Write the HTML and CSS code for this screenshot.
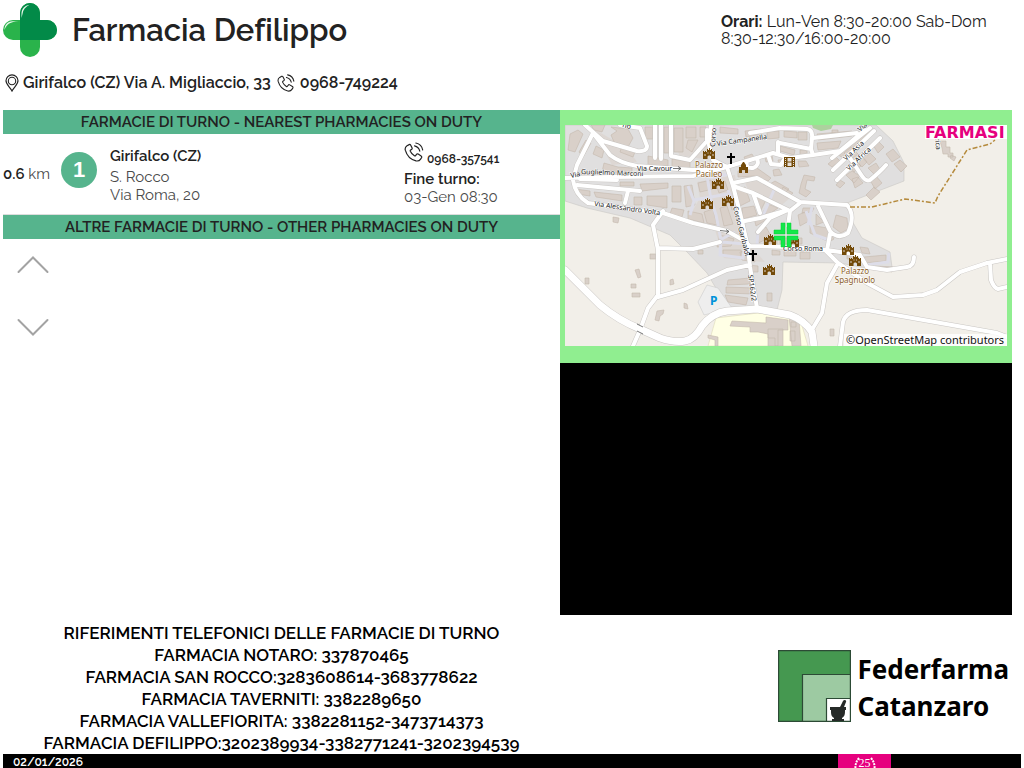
FILE: index.html
```html
<!DOCTYPE html>
<html lang="it">
<head>
<meta charset="utf-8">
<meta name="viewport" content="width=device-width, initial-scale=1">
<title>Farmacia Defilippo</title>
<link rel="stylesheet" href="styles.css">
</head>
<body>
<svg class="defs" aria-hidden="true">
  <symbol id="phone" viewBox="0 0 20 20">
    <path d="M5.2 2.6 3 3.800C1.500 4.800.8 6.200 1.300 8.200c1.500 5.300 5.800 9.600 10.700 10.700 2 .4 3.600-.3 4.600-1.800l.9-1.400c.4-.7.2-1.400-.4-1.800l-2.900-1.800c-.7-.4-1.300-.3-1.700.3l-.9 1.200c-.3.400-.7.500-1.200.2-1.800-1.100-3.200-2.600-4.100-4.500-.2-.5-.1-.9.300-1.200l1-.7c.6-.4.700-1 .4-1.600L6.600 3c-.3-.5-.8-.7-1.400-.4zM10.500 3.800c2.900.7 4.700 2.600 5.300 5.300M11.800 1c3.800.8 6.300 3.500 6.900 7" fill="none" stroke="currentColor" stroke-width="1.200" stroke-linecap="round"/>
  </symbol>
  <symbol id="castle" viewBox="0 0 12 11">
    <path d="M0 3h1v1h1V3h1v1h1V1h1v1h1V0h1v2h1V1h1v3h0V3h1v1h1V3h1v8H8V9c0-2-3.500-2-3.500 0v2H0z" fill="#734a08"/>
    <path d="M4.500 4.500h1v1h-1zM7 4.500h1v1H7zM1.500 6h1v2h-1zM9.500 6h1v2h-1z" fill="#d9d0c9"/>
  </symbol>
  <symbol id="church" viewBox="0 0 8 11"><path d="M3 0h2v3h3v2H5v6H3V5H0V3h3z" fill="#000"/></symbol>
  <path id="main-road" d="M565 270 600 305Q618 320 640 329L660 338Q675 343 685 341 695 339 702 326 712 313 727 311L757 309 790 315Q804 320 812 332L814 346"/>
  <path id="streets" d="M663 211 653 225 658 250V295L648 308 640 330 633 346M658 248 693 249 720 242M658 297 683 290 727 270 750 265M711 125 709 145 713 160 727 167 733 186 740 213 748 247 750 267 757 308M593 133 577 165 573 180Q575 195 588 203L630 209 663 213 693 223 727 231 743 240 750 246 790 247 825 250 838 263 867 283 893 297 923 295 937 290 960 272 987 263 1007 259M990 263 991 280Q994 288 998 289L1007 287M565 178 610 177 693 176 723 168M593 133 610 155Q620 163 637 166L693 170 723 168M585 125 603 141 637 151Q647 152 647 146L640 128 620 125M655 125V158M661 125V159M671 125V156L690 160 707 141 707 130M577 185 640 191M580 179 617 180M628 191 625 203M723 168 750 160 773 153 790 158 813 155 811 149 812 138Q813 130 807 129L780 128M750 133 780 128M780 143 811 149M747 161Q745 169 753 168 760 165 757 159M768 155 771 164 781 165 785 158M778 142V154M813 138 857 133M813 155 840 151 865 130M832 158 870 128M833 170 874 131M837 180 880 138M850 158 862 176Q866 182 870 180 880 172 886 165M733 183 757 178 800 202 847 205Q856 215 848 233 838 240 830 231L818 206M800 203 790 211 788 226M733 186 753 193 788 210 760 218 740 222M753 193 760 213M788 210 770 218 758 232M830 234 827 250 860 255 867 267 887 270 907 267Q914 266 914 257M837 265 827 283 822 313 813 328M840 346 843 322Q846 310 867 310L997 333 1007 337"/>
</svg>

<div class="page">
  <header class="header">
    <div class="identity">
      <div class="brand">
        <svg class="cross" viewBox="0 0 54 54" aria-hidden="true">
          <path d="M10 17h34a10 10 0 0 1 0 20H10a10 10 0 0 1 0-20z" fill="#2ab34b"/>
          <path d="M17 10a10 10 0 0 1 20 0v34a10 10 0 0 1-20 0z" fill="#2ab34b"/>
          <path d="M17 10a10 10 0 0 1 20 0v7h7a10 10 0 0 1 0 20H17z" fill="#028a48"/>
          <path d="M18.500 15v-4c0-5 3-8.500 8-9.300-4 2-6.500 5-7 9.300zM1.500 27c0-5 3-8.500 8-8.700h6c-8 .3-12 3-14 8.700z" fill="#e8f7ea"/>
        </svg>
        <h1 class="title">Farmacia Defilippo</h1>
      </div>
      <div class="contact">
        <svg class="pin" viewBox="0 0 14 18" aria-hidden="true"><path d="M7 17C5 13 1 10.500 1 6.800a6 6 0 0 1 12 0C13 10.500 9 13 7 17z" fill="none" stroke="#222" stroke-width="1.200"/><circle cx="7" cy="7" r="3.700" fill="none" stroke="#222" stroke-width="1.100"/></svg>
        <span>Girifalco (CZ) Via A. Migliaccio, 33</span>
        <svg class="phone" aria-hidden="true"><use href="#phone"/></svg>
        <span>0968-749224</span>
      </div>
    </div>
    <p class="hours"><b>Orari:</b> Lun-Ven 8:30-20:00 Sab-Dom 8:30-12:30/16:00-20:00</p>
  </header>

  <main class="main">
    <section class="duty">
      <h2 class="band">FARMACIE DI TURNO - NEAREST PHARMACIES ON DUTY</h2>
      <article class="entry">
        <div class="distance"><b>0.6</b> km</div>
        <div class="number">1</div>
        <div class="place"><b>Girifalco (CZ)</b><span>S. Rocco</span><span>Via Roma, 20</span></div>
        <div class="shift">
          <div class="call"><svg class="phone" aria-hidden="true"><use href="#phone"/></svg><b>0968-357541</b></div>
          <b>Fine turno:</b><span>03-Gen 08:30</span>
        </div>
      </article>
      <h2 class="band">ALTRE FARMACIE DI TURNO - OTHER PHARMACIES ON DUTY</h2>
      <div class="scroller">
        <button class="arrow" type="button" aria-label="Su"><svg viewBox="0 0 32 18"><path d="M1.500 16 16 1.500 30.500 16"/></svg></button>
        <button class="arrow" type="button" aria-label="Giù"><svg viewBox="0 0 32 18"><path d="M1.500 2 16 16.500 30.500 2"/></svg></button>
      </div>
    </section>

    <aside class="side">
      <div class="map">
        <svg viewBox="565 125 442 221" role="img" aria-label="Mappa di Girifalco">
          <rect x="565" y="125" width="442" height="221" fill="#f2efe9"/>
          <path d="M565 125H876L893 141 904 163V181L847 203 852 221 862 238 890 252 892 267 866 268 840 263 783 262 782 290 777 310 727 307 707 273 688 253 670 235 630 218 587 208 565 201z" fill="#e0dfdf" stroke="#c9c7c5" stroke-width=".6"/>
          <path d="M812 125h21l-2 4-10 2-8-3z" fill="#add19e"/>
          <path d="M716 318 758 313 800 319 808 346H708z" fill="#ffffe5" stroke="#d8d4b0" stroke-width=".5"/>
          <path d="M698 302 707 285 718 288 732 308 704 315z" fill="#eee" stroke="#ccc" stroke-width=".6"/>
          <path d="M697 182 735 175 745 240 765 262 724 258 715 230 690 215 700 198zM672 125h34l3 35-30-5zM592 128l35 20 10 14-25 3zM740 170l50 28-12 10-30-18z" fill="#dcd3cd" opacity=".65"/>

          <g class="building">
            <path d="M570 134l8-4 5 4-8 18-7-2zM591 125h14l-3 7-8-2zM611 127l17 2 5 9-5 9-14-5-3-7 6-4zM579 152l7-12 5 3-8 14zM596 146l8 4-2 8-9-4zM622 146l13 6-2 5-13-5zM645 127h8v12h-8zM664 127h6v26h-6zM674 128h9v24h-9zM686 127h10v11h-10zM688 140h10l-6 12-6-4zM700 127h6v10h-6zM648 156l20 4v6h-20zM672 159l18 3v6h-18zM604 163l14 4 14 1v6l-30-2zM582 171l18 2v5h-20zM620 182h14v4h-14zM640 184l28-1v5l-26 3zM575 189l15 2v5l-13-2zM594 192l28 3v6l-26-4zM647 196h20v12l-20-3zM634 197h8v8h-8zM672 186h9v16h-9zM613 217l6 1-1 5-5-1zM684 186l8-1 3 20-9 2zM672 208l12 2-2 7-12-3zM688 211l14 3 2 9-16-4z"/>
            <path d="M698 183l13-3 2 9-13 3zM716 184l9-3 3 9-9 3zM704 212l9-3 4 16-10-2zM720 208l7-2 6 18-9 2zM728 196h9l3 11-8 3zM735 190l10-3 5 14-10 5zM742 208l12-2 3 9-14 4zM756 196l10 4-5 10-3-1zM768 204l10 4-10 7-5-3zM738 171l19-3 14 10-3 3-14-5-16 1zM775 181l14 8-4 4-15-9zM773 170l6-1 3 6-8 1zM744 157l8-3 3 5-9 3zM765 157l7-2 1 6-7 1zM778 160l9-1 1 5-9 1zM798 161h8l3 5-10 1zM767 132l12-1v7l-12 1zM784 131l13 1v6l-13-1zM798 132h9v8h-9zM745 131l16-2v5l-15 3zM720 127l18 2v5l-18-1zM780 146l15 4-1 5-14-4zM800 150h7v5h-7zM801 184l3-9 11 2-1 4-7-1-2 9 6 3-5 5-7-4zM783 187l10 6-5 5-7-5z"/>
            <path d="M720 235l14 4-3 7-14 1zM723 250h18l2 7-20-1zM740 252l12-2 3 12-13-2zM756 232l10-5 5 9-12 7zM764 238h13v7h-13zM780 238h22v6h-22zM772 250l8 1v4h-8zM784 251h12v5h-12zM800 252h10v7h-10zM754 218l8-4 4 6-10 6zM816 214l8 8-8 3zM798 215l9-4 2 10-9 5zM810 225l17 3 7 11-5 3-19-9zM836 215l11 3 1 11-7 4-8-6zM803 208h11l-2 4-10 1zM728 280l22-2v6l-23 1zM726 287l28 1v6l-28-1zM725 295l23 3-2 7-18-3zM767 293h5v8h-5zM748 265l10 1v6h-9zM860 247l8 1 2 6-8-1zM864 257l22-2v6l-22 2zM875 266l18 1-1 5-14-2zM847 251h7v8h-7z"/>
            <path d="M817 134l35-3v5l-34 4zM817 143l24-2-3 7-20 2zM832 130h6v4h-6zM837 154l28-25 6 4-28 25zM828 164l8-7 4 4-8 6zM844 153l7-6 7 7-7 6zM848 165l8-5 5 6-7 6zM863 158l7-5 6 6-7 6zM873 145l5-4 6 6-6 6zM886 154l7-5 7 8-8 5zM870 180l6-4 6 7-7 6zM880 192l-9 8-5-5 8-8zM894 164l6-4 7 6-6 6zM868 168l8-5 5 8-6 4zM846 175l6-4 8 5-6 7zM840 180l5 3-5 5-4-3zM852 179l6-2 5 6-8 5zM857 162l6-5 4 5-5 5zM940 141h6v6h4v6h3v4h-5v-3h-5l-1-6zM951 155l5 2-2 4-4-3z"/>
            <path d="M650 254h6v5h-6zM635 270l4-1 2 8-3 1zM631 284h5v4h-5zM632 293h8v4h-8zM585 278h4v6h-4zM670 280l3-1 1 5-4 1zM684 303l3 1 1 5-4-1zM657 311l7-1-1 4-3 2-1 5-4-1zM698 250h5v4h-5zM732 321l34 2v-6l22 3v10h-10v16h-10v-12l-10-2h-8v-5l-20-1zM708 335l10 2v9h-3v-6l-7-2zM768 329h15v17h-8v-8h-7zM789 317l10 2 2 27h-9zM791 322h5v5h-5zM790 331h5v10h-5zM830 329h4v7h-4z"/>
          </g>

          <path class="lane" d="M707 176 711 200 716 215 721 240 720 255 743 258 745 244 722 242M694 200 728 194M688 186 694 201 690 215M710 178 728 174M728 190 736 210M762 218 774 190M758 232 757 245M806 211 815 235 829 240M812 207 808 225M867 265 888 262 889 253M745 254 750 252M735 232 720 240"/>

          <g class="casing"><use href="#streets"/><use class="wide" href="#main-road"/></g>
          <g class="surface"><use href="#streets"/><use class="wide" href="#main-road"/></g>
          <path class="track" d="M850 207 872 207 905 199 935 203 938 196 967 150 990 144 995 140"/>
          <path d="M637 324l6 3m-6 4 6 3M673 168.500h8m-3-2 3 2-3 2M720 230.500l9 1m-3-2 3 2-3 2" fill="none" stroke="#555" stroke-width=".8"/>

          <g class="streetname">
            <text transform="translate(571 178) rotate(-12)">Via</text>
            <text transform="translate(581 174) rotate(2)">Guglielmo Marconi</text>
            <text x="637" y="171">Via Cavour</text>
            <text transform="translate(594 206) rotate(8)">Via Alessandro Volta</text>
            <text transform="translate(717 146) rotate(-8)">Via Campanella</text>
            <text transform="translate(715 147) rotate(-86)">Corso</text>
            <text transform="translate(733 207) rotate(76)">Corso Garibaldi</text>
            <text transform="translate(748 275) rotate(82)">SP162/2</text>
            <text x="783" y="251">Corso Roma</text>
            <text transform="translate(846 161) rotate(-43)">Via Asia</text>
            <text transform="translate(849 171) rotate(-43)">Via Africa</text>
            <text transform="translate(860 132) rotate(-40)">Via</text>
            <text transform="translate(935 138) rotate(85)">rica</text>
            <text transform="translate(622 127) rotate(15)">no</text>
          </g>
          <g class="poi">
            <text x="709" y="168">Palazzo</text><text x="709" y="177">Pacileo</text>
            <text x="855" y="274">Palazzo</text><text x="855" y="283">Spagnuolo</text>
          </g>
          <text class="parking" x="710" y="305">P</text>
          <g>
            <use href="#castle" x="703" y="148" width="12" height="11"/><use href="#castle" x="712" y="178" width="12" height="11"/>
            <use href="#castle" x="701" y="198" width="12" height="11"/><use href="#castle" x="722" y="195" width="12" height="11"/>
            <use href="#castle" x="764" y="234" width="12" height="11"/><use href="#castle" x="787" y="236" width="12" height="11"/>
            <use href="#castle" x="763" y="264" width="12" height="11"/><use href="#castle" x="842" y="244" width="12" height="11"/>
            <use href="#castle" x="849" y="255" width="12" height="11"/>
            <use href="#church" x="727" y="153" width="8" height="11"/><use href="#church" x="749" y="250" width="8" height="11"/>
            <path d="M743 162h1l2 3v2h2v6h-3v-3h-3v3h-3v-6h2v-2z" fill="#734a08"/>
            <path d="M784 157h11v10h-11z" fill="#734a08"/><path d="M787.500 158h4v3.500h-4zM787.500 162.500h4v3.500h-4z" fill="#e8e2dc"/><path d="M785.500 158v9M793.500 158v9" stroke="#e8e2dc" stroke-dasharray="1 1"/>
          </g>
          <path d="M781 223h4v11h-11v-4h7zM787 223h4v7h7v4h-11zM774 236h11v11h-4v-7h-7zM787 236h11v4h-7v7h-4z" fill="#12e84a" stroke="#08cc32" stroke-width=".5"/>
          <rect x="925" y="125" width="82" height="14" fill="#fff"/>
          <text class="farmasi" x="925" y="138">FARMASI</text>
          <rect x="844" y="334" width="163" height="12" fill="#fff" opacity=".8"/>
          <text class="credit" x="846" y="344">©OpenStreetMap contributors</text>
        </svg>
      </div>
      <div class="video"></div>
    </aside>
  </main>

  <section class="bottom">
    <div class="references">
      <p>RIFERIMENTI TELEFONICI DELLE FARMACIE DI TURNO</p>
      <p>FARMACIA NOTARO: 337870465</p>
      <p>FARMACIA SAN ROCCO:3283608614-3683778622</p>
      <p>FARMACIA TAVERNITI: 3382289650</p>
      <p>FARMACIA VALLEFIORITA: 3382281152-3473714373</p>
      <p>FARMACIA DEFILIPPO:3202389934-3382771241-3202394539</p>
    </div>
    <div class="sponsor">
      <svg class="sponsor-logo" viewBox="0 0 73 72" aria-hidden="true">
        <g stroke="#2c4a35" stroke-width="1.200"><path d="M.6.600h71.800v70.800H.6z" fill="#459850"/><path d="M24.500 24.500h47.900v46.900H24.500z" fill="#9dcaa2"/><path d="M48.500 48.500h23.900v22.900H48.500z" fill="#fff"/></g>
        <path d="M52 57h10l3-6c1-2 4-1 3 1l-2 5h2v3h-1c0 4 0 6-3 8v1h2v2H54v-2h2v-1c-3-2-3-4-3-8h-1z" fill="#262a28"/>
      </svg>
      <div class="sponsor-name">Federfarma<br>Catanzaro</div>
    </div>
  </section>

  <footer class="footer">
    <time datetime="2026-01-02">02/01/2026</time>
    <div class="badge">
      <svg viewBox="0 0 22 20" aria-hidden="true"><path d="M5 1Q0 7 2 15M17 1q5 6 3 14" fill="none" stroke="#fff" stroke-width="2" stroke-dasharray="2 1"/></svg>
      <span>25</span>
    </div>
  </footer>
</div>
</body>
</html>
```
FILE: styles.css
```css
* { box-sizing: border-box; }
body, h1, h2, p { margin: 0; }
body {
  background: #fff;
  color: #222;
  font-family: Raleway, Lato, "Open Sans", sans-serif;
}
.defs { position: absolute; width: 0; height: 0; }
.page {
  display: flex;
  flex-direction: column;
  height: 100vh;
  padding: 0 3px;
  overflow: hidden;
}

.header {
  display: flex;
  justify-content: space-between;
  height: 110px;
}
.brand { display: flex; align-items: center; gap: 15px; height: 60px; }
.cross { width: 54px; height: 54px; }
.title {
  font-size: 31px;
  font-weight: 600;
  line-height: 40px;
  font-variant-ligatures: none;
}
.contact {
  display: flex;
  align-items: center;
  gap: 4px;
  padding: 11px 2px 0;
  font-size: 16px;
  font-weight: 600;
  line-height: 24px;
}
.pin { width: 14px; height: 18px; }
.phone { width: 20px; height: 20px; }
.contact .phone { width: 18px; height: 18px; margin: 0 1px 0 2px; }
.hours { width: 300px; padding-top: 13px; font-size: 16px; line-height: 17px; }

.main {
  display: grid;
  grid-template-columns: 557fr 452fr;
  flex: 1;
  padding-right: 9px;
}
.band {
  background: #56b48d;
  color: #222;
  font-size: 15px;
  font-weight: 600;
  line-height: 24px;
  text-align: center;
}
.entry {
  display: grid;
  grid-template-columns: 58px 49px 1fr 156px;
  align-items: center;
  height: 81px;
  border-bottom: 1px solid #ddd;
  color: #4a4a4a;
  font-size: 15px;
  line-height: 18px;
}
.entry b { color: #222; font-weight: 600; }
.number {
  width: 36px;
  height: 36px;
  margin-bottom: 8px;
  border-radius: 50%;
  background: #56b48d;
  color: #fff;
  font: 700 22px/36px "Liberation Sans", sans-serif;
  text-align: center;
}
.place, .shift { display: flex; flex-direction: column; }
.place { padding-top: 2px; }
.place b { margin-bottom: 3px; }
.call { display: flex; align-items: flex-end; gap: 3px; height: 26px; margin-bottom: 2px; color: #222; font-size: 12px; line-height: 18px; }
.call .phone { align-self: flex-start; }
.scroller { display: flex; flex-direction: column; gap: 44px; padding: 17px 14px; }
.arrow { width: 32px; height: 18px; padding: 0; border: 0; background: none; }
.arrow svg { display: block; fill: none; stroke: #a3a3a3; stroke-width: 2; stroke-linecap: round; }

.side { display: flex; flex-direction: column; }
.map { padding: 15px 5px 17px; background: #90ee90; }
.map svg { display: block; width: 100%; }
.video { height: 252px; background: #000; }
.building path { fill: #d9d0c9; stroke: #c5b8ad; stroke-width: 0.6; }
.casing { fill: none; stroke: #cac7c4; stroke-width: 5; stroke-linecap: round; stroke-linejoin: round; }
.casing .wide { stroke-width: 8; }
.surface { fill: none; stroke: #fff; stroke-width: 4; stroke-linecap: round; stroke-linejoin: round; }
.surface .wide { stroke-width: 7; }
.lane { fill: none; stroke: #dddde8; stroke-width: 3; }
.track { fill: none; stroke: #b58a3c; stroke-width: 1.5; stroke-dasharray: 5 2 2 2; }
.streetname text {
  fill: #222;
  stroke: #fff;
  stroke-width: 1;
  paint-order: stroke;
  font: 7px "Noto Sans", sans-serif;
}
.poi text {
  fill: #8b5a1c;
  stroke: #fff;
  stroke-width: 1;
  paint-order: stroke;
  text-anchor: middle;
  font: 8px "Noto Sans", sans-serif;
}
.parking { fill: #0092da; font: 700 12px "Noto Sans", sans-serif; }
.farmasi { fill: #e6007e; font: 700 16px "DejaVu Sans", sans-serif; }
.credit { fill: #111; font: 11px "Noto Sans", sans-serif; }

.bottom {
  display: grid;
  grid-template-columns: 557fr 461fr;
  align-items: center;
  color: #000;
}
.references { font-size: 17px; font-weight: 600; line-height: 22px; text-align: center; }
.sponsor { display: flex; align-items: center; justify-content: flex-end; gap: 6px; padding: 0 12px 4px 0; }
.sponsor-logo { width: 73px; height: 72px; }
.sponsor-name { padding-top: 4px; font: 700 26px/37px "Noto Sans", sans-serif; }

.footer {
  display: flex;
  justify-content: space-between;
  height: 14px;
  padding: 0 130px 0 10px;
  overflow: hidden;
  background: #000;
  color: #fff;
  font-size: 12px;
  font-weight: 600;
  line-height: 16px;
}
.badge { display: grid; place-items: start center; width: 53px; background: #e6007e; font: 12px/19px "Liberation Serif", serif; }
.badge > * { grid-area: 1 / 1; }
.badge svg { width: 22px; height: 20px; margin-top: 3px; }
```
